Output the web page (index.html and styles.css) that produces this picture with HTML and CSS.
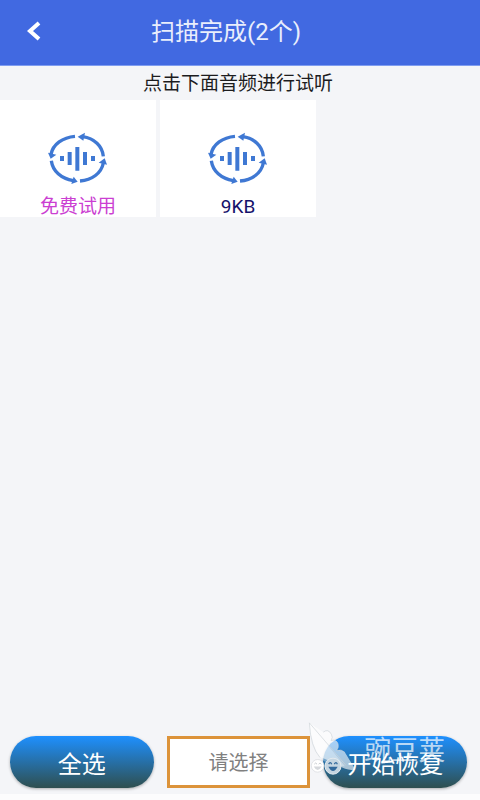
FILE: index.html
```html
<!DOCTYPE html>
<html lang="zh-CN">
<head>
<meta charset="utf-8">
<meta name="viewport" content="width=device-width, initial-scale=1">
<title>扫描完成</title>
<link rel="stylesheet" href="styles.css">
</head>
<body>
<svg class="defs" aria-hidden="true">
  <symbol id="audio" viewBox="144 111 180 162">
    <g fill="none" stroke="#3f78d3" stroke-width="10">
      <path d="M225 124C188 127 159 148 153 178"/>
      <path d="M154 197C158 228 183 250 220 257"/>
      <path d="M240 258C276 255 304 235 310 204"/>
      <path d="M310 184C307 153 283 130 248 125"/>
    </g>
    <g fill="#3f78d3">
      <path d="M144 173L169 179L152 191Z"/>
      <path d="M221 245L233 260L214 267Z"/>
      <path d="M314 190L321 209L296 203Z"/>
      <path d="M233 125L255 113L250 137Z"/>
      <path d="M180 183h12v15h-12zM203 171h12v39h-12zM226 156h12v71h-12zM249 171h12v39h-12zM273 183h12v15h-12z"/>
    </g>
  </symbol>
</svg>
<div class="page">
  <header class="bar">
    <button class="back" type="button" aria-label="返回">
      <svg viewBox="0 0 14 20" width="14" height="20"><path d="M12 2L3 10L12 18" fill="none" stroke="#fff" stroke-width="4"/></svg>
    </button>
    <h1 class="title">扫描完成(2个)</h1>
  </header>
  <main class="content">
    <p class="hint">点击下面音频进行试听</p>
    <div class="grid">
      <button class="card trial" type="button"><svg class="icon"><use href="#audio"/></svg><span>免费试用</span></button>
      <button class="card" type="button"><svg class="icon"><use href="#audio"/></svg><span>9KB</span></button>
    </div>
  </main>
  <footer class="actions">
    <button class="pill" type="button">全选</button>
    <select class="choice" aria-label="请选择"><option>请选择</option></select>
    <div class="restore">
      <button class="pill" type="button">开始恢复</button>
      <div class="mark">
        <svg class="wing" viewBox="24 30 150 170">
          <path d="M28 38L70 66Q84 58 94 72Q100 82 93 91Q108 86 114 101Q117 113 110 121Q124 116 135 127L166 178Q140 183 118 166L60 140Q38 110 28 38Z" fill="#fff" opacity=".6"/>
          <path d="M28 38L135 168Q80 170 60 140Q32 104 28 38Z" fill="#fff" opacity=".35"/>
          <path d="M28 38L138 166M28 38Q32 112 60 142M70 66Q84 54 94 72Q100 82 93 91Q108 86 114 101Q117 113 110 121Q124 116 135 127" fill="none" stroke="#cfd5da" stroke-width="2"/>
          <circle cx="53" cy="167" r="19" fill="#fff" stroke="#d5d8dc" stroke-width="2"/>
          <circle cx="99" cy="168" r="24" fill="#c5d5e1" stroke="#e4ebef" stroke-width="3"/>
          <path d="M41 169Q53 190 65 169Z" fill="#d5d8dc"/>
          <path d="M85 170Q99 195 113 170Z" fill="#32699b"/>
          <path d="M43 162q4-7 8 0M56 162q4-7 8 0" fill="none" stroke="#c9cdd1" stroke-width="3"/>
          <path d="M86 162q5-9 9 0M103 162q5-9 9 0" fill="none" stroke="#32699b" stroke-width="4"/>
        </svg>
        <span class="brand">豌豆荚</span>
      </div>
    </div>
  </footer>
</div>
</body>
</html>
```
FILE: styles.css
```css
* { box-sizing: border-box; }

body {
  margin: 0;
  background: #f4f5f8;
  font-family: Roboto, "Noto Sans CJK SC", sans-serif;
  color: #1c1c1e;
}

button, select { font-family: inherit; }

.defs { position: absolute; width: 0; height: 0; }

.page {
  display: flex;
  flex-direction: column;
  min-height: 100vh;
}

.bar {
  display: flex;
  align-items: center;
  height: 66px;
  padding-right: 96px;
  background: #4169e1;
  border-bottom: 1px solid #7f9df0;
}

.back {
  display: flex;
  align-items: center;
  justify-content: center;
  width: 68px;
  height: 48px;
  padding: 0 0 4px;
  border: 0;
  background: none;
}

.title {
  flex: 1;
  margin: 0;
  padding-bottom: 2px;
  text-align: center;
  font-size: 24px;
  line-height: 32px;
  font-weight: 400;
  color: #e9eefc;
}

.content { flex: 1; }

.hint {
  margin: 0;
  padding: 5px 4px 3px 0;
  text-align: center;
  font-size: 19px;
  line-height: 26px;
  font-weight: 400;
}

.grid {
  display: grid;
  grid-template-columns: repeat(3, 1fr);
  gap: 4px;
  padding-right: 4px;
}

.card {
  display: flex;
  flex-direction: column;
  align-items: center;
  gap: 10px;
  padding: 32px 0 0;
  border: 0;
  background: #fff;
  font-size: 19px;
  line-height: 21px;
  color: #15116b;
}

.trial { color: #cb3fd2; }

.icon { width: 60px; height: 54px; }

.actions {
  display: grid;
  grid-template-columns: repeat(3, 1fr);
  gap: 13px;
  padding: 0 13px 6px 10px;
  border-bottom: 6px solid #fcfcfd;
}

.pill {
  width: 100%;
  height: 52px;
  padding: 0;
  border: 0;
  border-radius: 26px;
  background: linear-gradient(#1e90ff, #2f4f4f);
  box-shadow: 0 1px 3px rgba(0, 0, 0, 0.3);
  font-size: 24px;
  color: #fff;
}

.choice {
  appearance: none;
  width: 100%;
  height: 52px;
  padding: 2px 0 0;
  border: 3px solid #dc933a;
  border-radius: 0;
  background: #fff;
  text-align: center;
  text-align-last: center;
  font-size: 20px;
  font-weight: 400;
  color: #808080;
}

.restore { position: relative; }

.mark {
  position: absolute;
  top: -16px;
  left: -15px;
  display: flex;
  align-items: flex-start;
  gap: 6px;
  pointer-events: none;
}

.wing { width: 50px; height: 57px; }

.brand {
  padding-top: 15px;
  font-size: 27px;
  line-height: 32px;
  white-space: nowrap;
  color: rgba(255, 255, 255, 0.7);
}
```
